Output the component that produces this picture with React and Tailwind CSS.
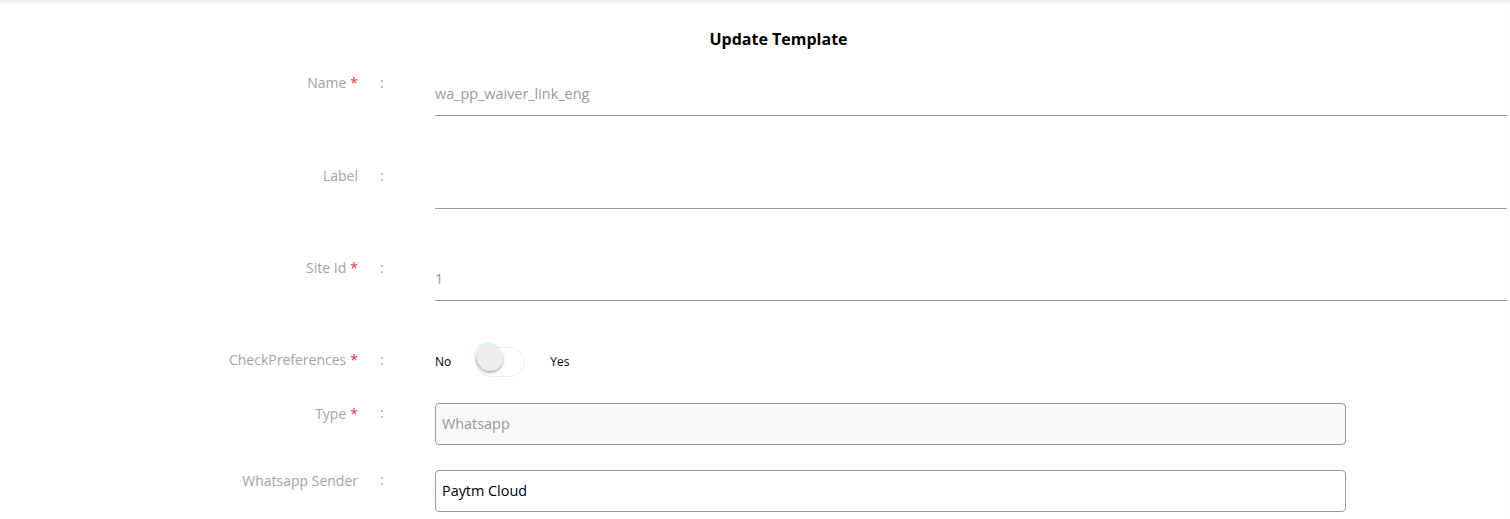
import React, { useState } from "react";

const Label = ({ text, required }) => (
  <div className="w-[358px] shrink-0 text-right text-[14px] leading-[20px] text-[#a3a3a3]">
    {text}
    {required && <span className="ml-1 text-[#e8333a]">*</span>}
  </div>
);

const Colon = () => (
  <div className="ml-[22px] w-[55px] shrink-0 text-[14px] leading-[20px] text-[#a3a3a3]">:</div>
);

const UnderlineRow = ({ label, required, value, className }) => (
  <div className={"flex items-start " + className}>
    <Label text={label} required={required} />
    <Colon />
    <div className="flex h-[43px] flex-1 items-center border-b border-[#9e9e9e] pb-px text-[14.4px] text-[#9a9a9a]">
      {value}
    </div>
  </div>
);

export default function App() {
  const [checked, setChecked] = useState(false);

  return (
    <div className="min-h-[519px] bg-white pr-[3px] font-['Open_Sans',sans-serif] shadow-[inset_0_5px_5px_-3px_rgba(0,0,0,0.08)]">
      <h2 className="pl-[50px] pt-[28px] text-center text-[16px] font-bold leading-[22px] text-black">
        Update Template
      </h2>

      <UnderlineRow className="mt-[23px]" label="Name" required value="wa_pp_waiver_link_eng" />
      <UnderlineRow className="mt-[50px]" label="Label" value="" />
      <UnderlineRow className="mt-[49px]" label="Site Id" required value="1" />

      <div className="mt-[49px] flex items-start">
        <Label text="CheckPreferences" required />
        <Colon />
        <div className="flex h-[24px] items-center text-[12px] text-black">
          <span>No</span>
          <button
            onClick={() => setChecked(!checked)}
            className="relative ml-[25px] h-[30px] w-[49px] rounded-full border border-[#ececec] bg-white"
          >
            <span
              className={
                "absolute top-[-3px] h-[26px] w-[26px] rounded-full bg-[#eeeeee] shadow-[0_2px_3px_rgba(0,0,0,0.3),-2px_-2px_0_1px_rgba(180,225,215,0.35)] " +
                (checked ? "left-[21px]" : "left-[0px]")
              }
            />
          </button>
          <span className="ml-[25px]">Yes</span>
        </div>
      </div>

      <div className="mt-[29px] flex items-start">
        <div className="pt-[1px]">
          <Label text="Type" required />
        </div>
        <Colon />
        <div className="flex h-[42px] w-[911px] items-center rounded-[4px] border border-[#9e9e9e] bg-[#f8f8f8] px-[6px] text-[14.4px] text-[#9a9a9a]">
          Whatsapp
        </div>
      </div>

      <div className="mt-[25px] flex items-start">
        <div className="pt-[1px]">
          <Label text="Whatsapp Sender" />
        </div>
        <Colon />
        <div className="flex h-[42px] w-[911px] items-center rounded-[4px] border border-[#9e9e9e] bg-white px-[6px] text-[14.4px] text-black">
          Paytm Cloud
        </div>
      </div>
    </div>
  );
}
